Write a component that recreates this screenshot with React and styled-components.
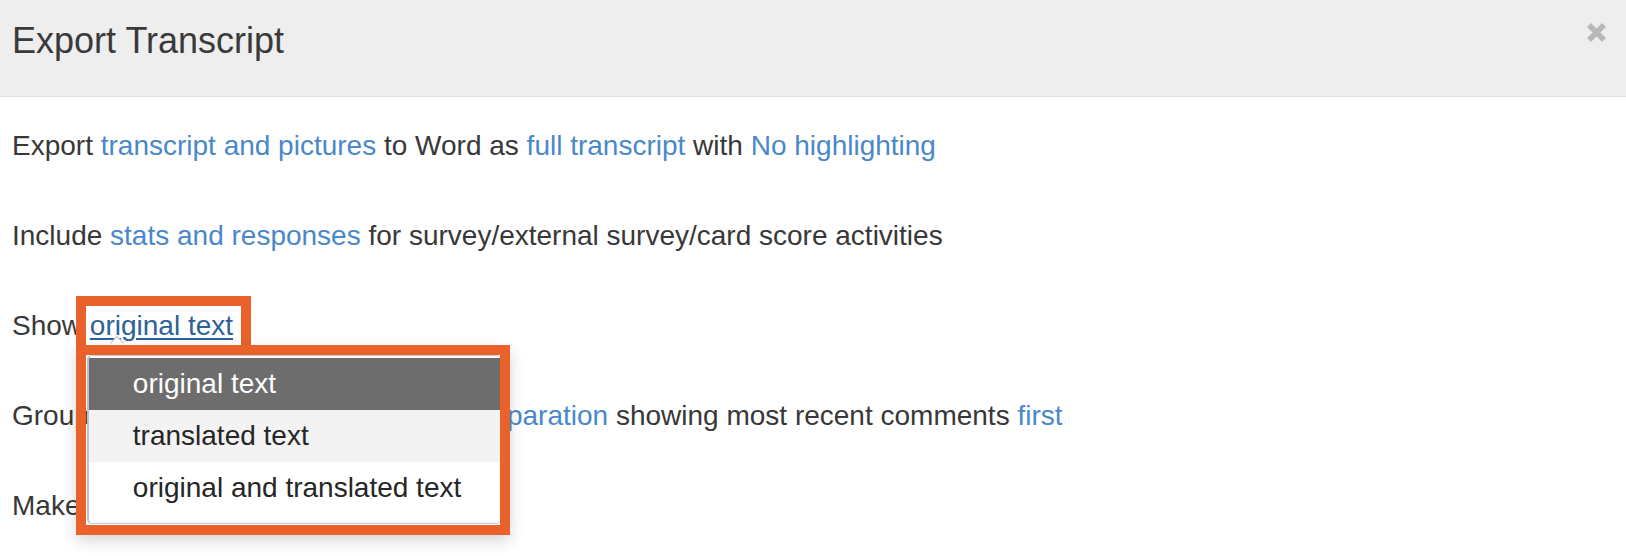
import React from "react";
import styled, { createGlobalStyle } from "styled-components";

const GlobalStyle = createGlobalStyle`
  html, body {
    margin: 0;
    padding: 0;
    background: #fff;
    overflow: hidden;
  }
  body {
    font-family: "Liberation Sans", Arial, Helvetica, sans-serif;
    color: #333;
  }
`;

const Modal = styled.div`
  width: 100%;
  height: 556px;
  background: #fff;
`;

const Header = styled.div`
  height: 97px;
  box-sizing: border-box;
  padding: 20px 12px 0 12px;
  background: #eeeeee;
  border-bottom: 1px solid #e3e3e3;
  display: flex;
  align-items: flex-start;
  justify-content: space-between;
`;

const Title = styled.h4`
  margin: 0;
  font-size: 36px;
  line-height: 41px;
  font-weight: normal;
  color: #3a3a3a;
`;

const CloseButton = styled.button`
  border: 0;
  background: transparent;
  padding: 0;
  margin: 2px 7px 0 0;
  width: 21px;
  height: 21px;
  cursor: pointer;
  display: flex;
`;

const Body = styled.div`
  padding: 30px 12px 0 12px;
`;

const Line = styled.p`
  margin: 0 0 52px 0;
  font-size: 28px;
  line-height: 38px;
  color: #383838;
`;

const Option = styled.a`
  color: ${(p) => (p.$open ? "#2d6199" : "#4a88c9")};
  text-decoration: ${(p) => (p.$open ? "underline" : "none")};
  text-decoration-thickness: 2px;
  text-underline-offset: 3px;
  cursor: pointer;
`;

const Anchor = styled.span`
  position: relative;
  display: inline-block;
  height: 38px;
`;

const LinkFrame = styled.span`
  position: absolute;
  left: -14px;
  top: -11px;
  right: -18px;
  bottom: -10px;
  border: 10px solid #e9622b;
  pointer-events: none;
  z-index: 2;
`;

const Caret = styled.span`
  position: absolute;
  left: 22px;
  top: 31px;
  width: 9px;
  height: 9px;
  border-top: 1px solid #c4c4c4;
  border-left: 1px solid #c4c4c4;
  background: #fff;
  transform: rotate(45deg);
  z-index: 1;
`;

const Menu = styled.ul`
  position: absolute;
  left: -3px;
  top: 48px;
  width: 414px;
  margin: 0;
  padding: 2px 0 9px 0;
  list-style: none;
  background: #fff;
  border: 1px solid #c8c8c8;
  border-left: 2px solid #c0c0c0;
  border-radius: 5px;
  box-sizing: border-box;
  z-index: 3;
`;

const MenuItem = styled.li`
  height: 52px;
  line-height: 52px;
  padding-left: 44px;
  font-size: 28px;
  white-space: nowrap;
  color: ${(p) => (p.$active ? "#fff" : "#262626")};
  background: ${(p) =>
    p.$active ? "#6d6d6d" : p.$hover ? "#f3f3f3" : "transparent"};
`;

const MenuFrame = styled.span`
  position: absolute;
  left: -14px;
  top: 38px;
  width: 434px;
  height: 190px;
  box-sizing: border-box;
  border: 10px solid #e9622b;
  box-shadow: 0 6px 14px rgba(0, 0, 0, 0.16);
  pointer-events: none;
  z-index: 4;
`;

export default function App() {
  return (
    <>
      <GlobalStyle />
      <Modal>
        <Header>
          <Title>Export Transcript</Title>
          <CloseButton aria-label="Close">
            <svg width="21" height="21" viewBox="0 0 21 21">
              <path
                d="M3 3 L18 18 M18 3 L3 18"
                stroke="#b8b8b8"
                strokeWidth="5.5"
                strokeLinecap="butt"
              />
            </svg>
          </CloseButton>
        </Header>
        <Body>
          <Line>
            Export <Option>transcript and pictures</Option> to Word as{" "}
            <Option>full transcript</Option> with <Option>No highlighting</Option>
          </Line>
          <Line>
            Include <Option>stats and responses</Option> for survey/external
            survey/card score activities
          </Line>
          <Line>
            Show{" "}
            <Anchor>
              <Option $open>original text</Option>
              <LinkFrame />
              <Caret />
              <Menu>
                <MenuItem $active>original text</MenuItem>
                <MenuItem $hover>translated text</MenuItem>
                <MenuItem>original and translated text</MenuItem>
              </Menu>
              <MenuFrame />
            </Anchor>
          </Line>
          <Line>
            Group by <Option>participant</Option> with{" "}
            <Option>page break separation</Option> showing most recent comments{" "}
            <Option>first</Option>
          </Line>
          <Line>
            Make it <Option>anonymous</Option>
          </Line>
        </Body>
      </Modal>
    </>
  );
}
